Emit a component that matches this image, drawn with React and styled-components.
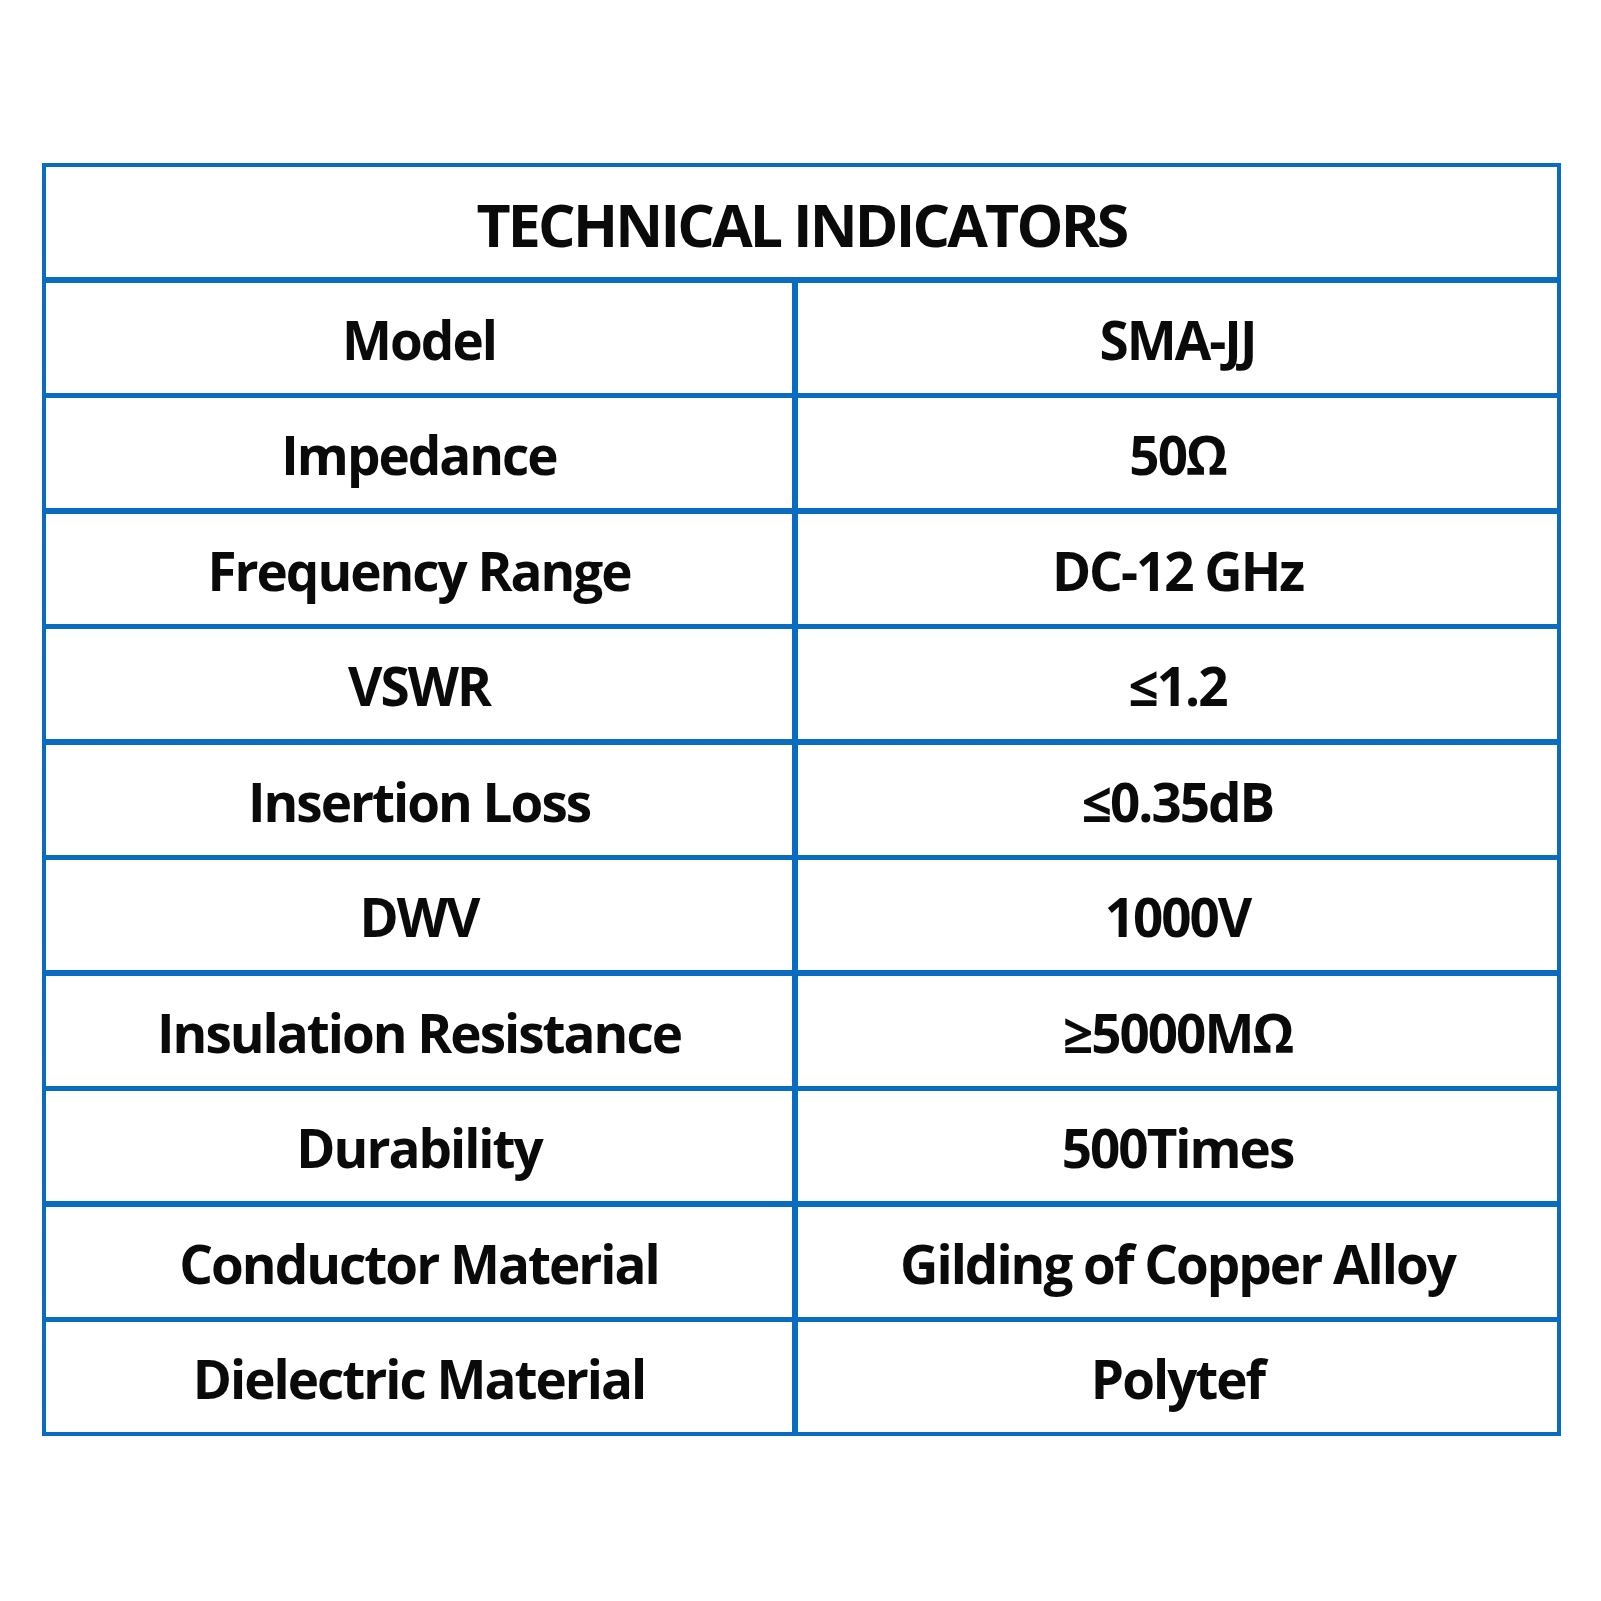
import React from "react";
import styled, { createGlobalStyle } from "styled-components";

const Global = createGlobalStyle`
  html, body { margin: 0; padding: 0; background: #ffffff; }
  body { font-family: "Open Sans", "Noto Sans", sans-serif; }
`;

const Page = styled.div`
  width: 1601px;
  height: 1601px;
  box-sizing: border-box;
  padding: 163px 0 0 42px;
  background: #ffffff;
`;

const Sheet = styled.div`
  width: 1519px;
  box-sizing: border-box;
  border: 4px solid #0a6cc1;
  background: #0a6cc1;
  display: grid;
  grid-template-columns: 746px 1fr;
  grid-auto-rows: 110px;
  gap: 5.5px 6px;
`;

const Cell = styled.div`
  background: #ffffff;
  display: flex;
  align-items: center;
  justify-content: center;
  padding-top: ${(p) => (p.$title ? 3 : 3)}px;
  box-sizing: border-box;
  grid-column: ${(p) => (p.$title ? "1 / span 2" : "auto")};
  font-family: "Open Sans", "Noto Sans", sans-serif;
  font-weight: 700;
  font-size: ${(p) => (p.$title ? 59 : 53)}px;
  letter-spacing: ${(p) => (p.$title ? -2.8 : -2)}px;
  color: #0a0a0a;
  white-space: nowrap;
`;

const rows = [
  ["Model", "SMA-JJ"],
  ["Impedance", "50Ω"],
  ["Frequency Range", "DC-12 GHz"],
  ["VSWR", "≤1.2"],
  ["Insertion Loss", "≤0.35dB"],
  ["DWV", "1000V"],
  ["Insulation Resistance", "≥5000MΩ"],
  ["Durability", "500Times"],
  ["Conductor Material", "Gilding of Copper Alloy"],
  ["Dielectric Material", "Polytef"],
];

export default function App() {
  return (
    <Page>
      <Global />
      <Sheet>
        <Cell $title>TECHNICAL INDICATORS</Cell>
        {rows.map(([k, v]) => (
          <React.Fragment key={k}>
            <Cell>{k}</Cell>
            <Cell>{v}</Cell>
          </React.Fragment>
        ))}
      </Sheet>
    </Page>
  );
}
